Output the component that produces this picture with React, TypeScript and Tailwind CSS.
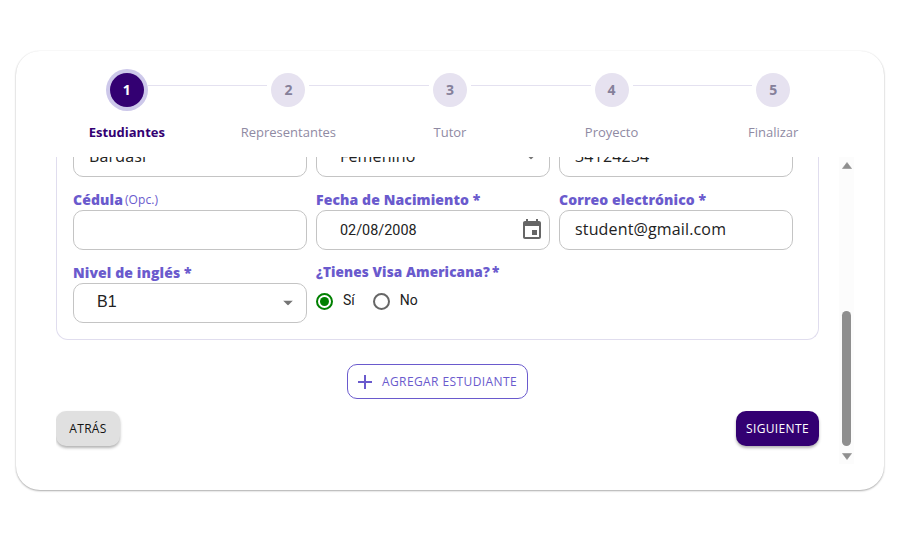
/**
 * Registration wizard: stepper, student form and navigation buttons.
 */

const steps = ['Estudiantes', 'Representantes', 'Tutor', 'Proyecto', 'Finalizar'];

function Stepper(): React.ReactElement {
  return (
    <div className="flex ml-[30px] w-[808px]">
      {steps.map((label, i) => (
        <div key={label} className="relative flex h-[90px] flex-1 flex-col items-center pt-[22px]">
          {i > 0 && <div className="absolute top-[34px] left-[calc(-50%+21px)] right-[calc(50%+21px)] h-px bg-[#e4e1f0]" />}
          {i === 0 ? (
            <div className="flex h-[34px] w-[34px] shrink-0 items-center justify-center rounded-full bg-[#330072] text-sm font-bold text-white shadow-[0_0_0_4px_#cdc8ea]">
              {i + 1}
            </div>
          ) : (
            <div className="flex h-[34px] w-[34px] shrink-0 items-center justify-center rounded-full bg-[#e6e2f0] text-sm font-bold text-[#85809a]">
              {i + 1}
            </div>
          )}
          {i === 0 ? (
            <span className="mt-[16px] text-[13px] leading-[18px] font-bold text-[#330072]">{label}</span>
          ) : (
            <span className="mt-[16px] text-[13px] leading-[18px] text-[#8f8aa3]">{label}</span>
          )}
        </div>
      ))}
    </div>
  );
}

function Label({ children }: { children: React.ReactNode }): React.ReactElement {
  return <div className="flex h-[20px] items-center text-sm leading-5 font-extrabold tracking-[0.1px] text-[#6a5acd]">{children}</div>;
}

function TextField({ value }: { value: string }): React.ReactElement {
  return (
    <input
      readOnly
      value={value}
      className="h-10 w-full rounded-[10px] border border-[#c4c4c4] bg-white px-[15px] pb-[2px] text-base tracking-[0.15px] text-[#222] outline-none"
    />
  );
}

function Caret(): React.ReactElement {
  return (
    <svg className="absolute top-1/2 right-[13px] h-[5px] w-[10px] -translate-y-1/2" viewBox="0 0 10 5" fill="#757575">
      <path d="M0 0h10L5 5z" />
    </svg>
  );
}

function Radio({ checked, label }: { checked: boolean; label: string }): React.ReactElement {
  return (
    <label className="flex items-center gap-[10px] font-['Roboto',sans-serif] text-sm text-[#222]">
      {checked ? (
        <span className="flex h-[17px] w-[17px] items-center justify-center rounded-full border-2 border-[#008000]">
          <span className="h-[9px] w-[9px] rounded-full bg-[#008000]" />
        </span>
      ) : (
        <span className="h-[17px] w-[17px] rounded-full border-2 border-[#666]" />
      )}
      <span className="relative -top-px">{label}</span>
    </label>
  );
}

function StudentPanel(): React.ReactElement {
  return (
    <div className="-mt-[20px] w-[763px] rounded-b-[12px] border border-t-0 border-[#e0ddee] px-[16px] pb-[16px]">
      <div className="grid grid-cols-[234px_234px_234px] gap-x-[9px]">
        <div className="relative h-10 rounded-[10px] border border-[#c4c4c4] px-[15px] leading-[36px] tracking-[0.15px] text-[#222]">Bardasi</div>
        <div className="relative h-10 rounded-[10px] border border-[#c4c4c4] pl-[23px] leading-[36px] tracking-[0.15px] text-[#222]">
          Femenino
          <Caret />
        </div>
        <TextField value="34124234" />

        <div className="mt-[13px]">
          <Label>
            Cédula<span className="ml-[2px] text-xs font-normal tracking-[0.1px]">(Opc.)</span>
          </Label>
        </div>
        <div className="mt-[13px]">
          <Label>Fecha de Nacimiento *</Label>
        </div>
        <div className="mt-[13px]">
          <Label>Correo electrónico *</Label>
        </div>

        <TextField value="" />
        <div className="relative flex h-10 items-center rounded-[10px] border border-[#c4c4c4] pt-[1px] pl-[23px] font-['Roboto',sans-serif] text-[14.4px] text-[#222]">
          02/08/2008
          <svg className="absolute top-[7px] right-[5px] h-6 w-6" viewBox="0 0 24 24" fill="#666">
            <path d="M17 12h-5v5h5v-5zM16 1v2H8V1H6v2H5c-1.11 0-1.99.9-1.99 2L3 19c0 1.1.89 2 2 2h14c1.1 0 2-.9 2-2V5c0-1.1-.9-2-2-2h-1V1h-2zm3 18H5V8h14v11z" />
          </svg>
        </div>
        <TextField value="student@gmail.com" />

        <div className="mt-[13px]">
          <Label>Nivel de inglés *</Label>
        </div>
        <div className="mt-[12px] [&>div]:text-[13.6px]">
          <Label>
            ¿Tienes Visa Americana?<span className="ml-[2px]">*</span>
          </Label>
        </div>
        <div />

        <div className="relative flex h-10 items-center rounded-[10px] border border-[#c4c4c4] pb-[2px] pl-[23px] font-['Liberation_Sans',sans-serif] text-base text-[#222]">
          B1
          <Caret />
        </div>
        <div className="flex items-start gap-[18px] pt-[8px]">
          <Radio checked label="Sí" />
          <Radio checked={false} label="No" />
        </div>
      </div>
    </div>
  );
}

function Scrollbar(): React.ReactElement {
  return (
    <div className="flex w-[15px] flex-col items-center bg-[#fcfcfc]">
      <svg className="mt-[5px] h-[7px] w-[10px]" viewBox="0 0 10 7" fill="#8f8f8f" stroke="#8f8f8f" strokeWidth={0.6} strokeLinejoin="round">
        <path d="M5 .5l4.5 6h-9z" />
      </svg>
      <div className="mt-[142px] h-[135px] w-[9px] rounded-full bg-[#8f8f8f]" />
      <svg className="mt-[7px] h-[7px] w-[10px]" viewBox="0 0 10 7" fill="#8f8f8f" stroke="#8f8f8f" strokeWidth={0.6} strokeLinejoin="round">
        <path d="M5 6.5L.5.5h9z" />
      </svg>
    </div>
  );
}

export default function App(): React.ReactElement {
  return (
    <div className="h-[535px] w-[899px] overflow-hidden bg-white pt-[51px] pl-[16px] font-['Open_Sans',sans-serif]">
      <div className="h-[439px] w-[868px] rounded-[24px] bg-white shadow-[0_1px_2px_rgba(0,0,0,0.32),0_0_2px_rgba(0,0,0,0.06)]">
        <Stepper />
        <div className="mt-[16px] flex h-[307px] overflow-hidden pl-[40px]">
          <div className="w-[783px] overflow-hidden">
            <StudentPanel />
            <div className="mt-[24px] flex w-[763px] justify-center">
              <button
                type="button"
                className="flex h-[35px] w-[181px] items-center justify-center gap-[10px] rounded-[10px] border border-[#6a5acd] text-xs font-medium tracking-[0.4px] text-[#6a5acd]"
              >
                <svg className="h-[14px] w-[14px]" viewBox="0 0 14 14" fill="#6a5acd">
                  <path d="M6 0h2v6h6v2H8v6H6V8H0V6h6z" />
                </svg>
                AGREGAR ESTUDIANTE
              </button>
            </div>
            <div className="mt-[12px] flex w-[763px] justify-between">
              <button
                type="button"
                className="h-[35px] w-[64px] rounded-[10px] bg-[#e0e0e0] text-xs font-medium tracking-[0.34px] text-[#111] shadow-[0_2px_3px_rgba(0,0,0,0.3)]"
              >
                ATRÁS
              </button>
              <button
                type="button"
                className="h-[35px] w-[83px] rounded-[10px] bg-[#330072] text-xs font-medium tracking-[0.34px] text-white shadow-[0_2px_3px_rgba(0,0,0,0.3)]"
              >
                SIGUIENTE
              </button>
            </div>
          </div>
          <Scrollbar />
        </div>
      </div>
    </div>
  );
}
